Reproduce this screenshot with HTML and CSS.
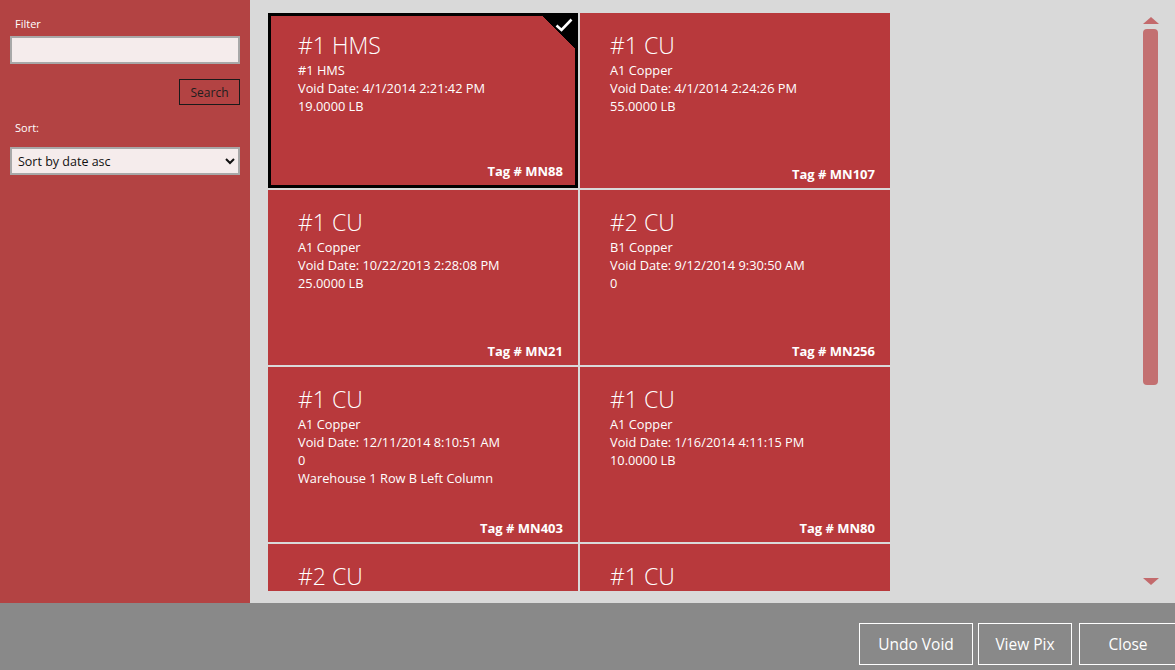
FILE: index.html
```html
<!DOCTYPE html>
<html lang="en">

<head>
    <meta charset="UTF-8">
    <meta name="viewport" content="width=device-width, initial-scale=1.0">
    <title>Void Tags</title>
    <link rel="stylesheet" href="styles.css">
</head>

<body>
    <div id="main">
        <div id="sidebar">
            <label class="field-label">Filter</label>
            <input type="text" class="filter-input">
            <div class="search-row">
                <button class="search-btn">Search</button>
            </div>
            <label class="field-label sort-label">Sort:</label>
            <select class="sort-select">
                <option>Sort by date asc</option>
                <option>Sort by date desc</option>
            </select>
        </div>

        <div id="content">
            <div id="tiles">
                <div class="tile selected">
                    <span class="check">
                        <svg width="18" height="14" viewBox="0 0 18 14">
                            <path d="M1.5 7.5 L6.5 12 L16.5 1.5" fill="none" stroke="#fff" stroke-width="2.6"/>
                        </svg>
                    </span>
                    <div class="title">#1 HMS</div>
                    <div class="line">#1 HMS</div>
                    <div class="line">Void Date: 4/1/2014 2:21:42 PM</div>
                    <div class="line">19.0000 LB</div>
                    <div class="tag">Tag # MN88</div>
                </div>
                <div class="tile">
                    <div class="title">#1 CU</div>
                    <div class="line">A1 Copper</div>
                    <div class="line">Void Date: 4/1/2014 2:24:26 PM</div>
                    <div class="line">55.0000 LB</div>
                    <div class="tag">Tag # MN107</div>
                </div>
                <div class="tile">
                    <div class="title">#1 CU</div>
                    <div class="line">A1 Copper</div>
                    <div class="line">Void Date: 10/22/2013 2:28:08 PM</div>
                    <div class="line">25.0000 LB</div>
                    <div class="tag">Tag # MN21</div>
                </div>
                <div class="tile">
                    <div class="title">#2 CU</div>
                    <div class="line">B1 Copper</div>
                    <div class="line">Void Date: 9/12/2014 9:30:50 AM</div>
                    <div class="line">0</div>
                    <div class="tag">Tag # MN256</div>
                </div>
                <div class="tile">
                    <div class="title">#1 CU</div>
                    <div class="line">A1 Copper</div>
                    <div class="line">Void Date: 12/11/2014 8:10:51 AM</div>
                    <div class="line">0</div>
                    <div class="line">Warehouse 1 Row B Left Column</div>
                    <div class="tag">Tag # MN403</div>
                </div>
                <div class="tile">
                    <div class="title">#1 CU</div>
                    <div class="line">A1 Copper</div>
                    <div class="line">Void Date: 1/16/2014 4:11:15 PM</div>
                    <div class="line">10.0000 LB</div>
                    <div class="tag">Tag # MN80</div>
                </div>
                <div class="tile">
                    <div class="title">#2 CU</div>
                </div>
                <div class="tile">
                    <div class="title">#1 CU</div>
                </div>
            </div>

            <div id="scrollbar">
                <span class="arrow-up"></span>
                <span class="thumb"></span>
                <span class="track"></span>
                <span class="arrow-down"></span>
            </div>
        </div>
    </div>

    <div id="footer">
        <button class="foot-btn undo-btn">Undo Void</button>
        <button class="foot-btn pix-btn">View Pix</button>
        <button class="foot-btn close-btn">Close</button>
    </div>
</body>

</html>
```

FILE: styles.css
```css
* {
    margin: 0;
    padding: 0;
    box-sizing: border-box;
}

body {
    width: 1175px;
    height: 670px;
    overflow: hidden;
    font-family: "Open Sans", "Noto Sans", sans-serif;
    background: #d9d9d9;
}

#main {
    display: flex;
    height: 603px;
}

/* left filter panel */
#sidebar {
    width: 250px;
    background: #b34343;
    padding: 16px 10px 0 10px;
    display: flex;
    flex-direction: column;
}

.field-label {
    color: #fff;
    font-size: 11px;
    padding-left: 5px;
    height: 17px;
}

.filter-input {
    margin-top: 3px;
    width: 230px;
    height: 28px;
    background: #f5ecec;
    border: 2px solid #a8a8a8;
    outline: none;
}

.search-row {
    display: flex;
    justify-content: flex-end;
    margin-top: 15px;
}

.search-btn {
    width: 61px;
    height: 26px;
    background: transparent;
    border: 1px solid #1a1a1a;
    color: #1e1e1e;
    font-family: inherit;
    font-size: 12px;
}

.sort-label {
    margin-top: 15px;
}

.sort-select {
    margin-top: 10px;
    width: 230px;
    height: 28px;
    background: #f5ecec;
    border: 2px solid #a8a8a8;
    font-family: inherit;
    font-size: 12.5px;
    padding-left: 2px;
    color: #111;
}

/* tile area */
#content {
    flex: 1;
    display: flex;
    padding: 13px 17px 0 18px;
}

#tiles {
    width: 622px;
    height: 578px;
    overflow: hidden;
    display: grid;
    grid-template-columns: 310px 310px;
    grid-auto-rows: 175px;
    gap: 2px;
    align-content: start;
}

.tile {
    position: relative;
    background: #b8393c;
    color: #fff;
    padding: 17px 15px 0 30px;
    display: flex;
    flex-direction: column;
}

.tile.selected {
    border: 3px solid #000;
    padding: 14px 12px 0 27px;
}

.title {
    font-size: 23px;
    font-weight: 300;
    line-height: 30px;
    margin-bottom: 1px;
}

.line {
    font-size: 12.8px;
    line-height: 18px;
}

.tag {
    margin-top: auto;
    margin-bottom: 5px;
    text-align: right;
    font-weight: bold;
    font-size: 13px;
    line-height: 18px;
}

.check {
    position: absolute;
    top: 0;
    right: 0;
    width: 33px;
    height: 33px;
    background: linear-gradient(to bottom left, #000 50%, transparent 50%);
}

.check svg {
    position: absolute;
    top: 2px;
    right: 2px;
}

/* scrollbar */
#scrollbar {
    margin-left: auto;
    width: 15px;
    display: flex;
    flex-direction: column;
    align-items: center;
    padding-top: 4px;
}

.arrow-up {
    width: 0;
    height: 0;
    border-left: 8px solid transparent;
    border-right: 8px solid transparent;
    border-bottom: 7px solid #c36a6c;
}

.thumb {
    margin-top: 5px;
    width: 15px;
    height: 356px;
    border-radius: 4px;
    background: #c37071;
}

.track {
    flex: 1;
}

.arrow-down {
    width: 0;
    height: 0;
    margin-bottom: 18px;
    border-left: 8px solid transparent;
    border-right: 8px solid transparent;
    border-top: 7px solid #c36a6c;
}

/* bottom command bar */
#footer {
    height: 67px;
    background: #898989;
    display: flex;
    justify-content: flex-end;
    align-items: flex-start;
    padding-top: 20px;
    gap: 5px;
}

.foot-btn {
    height: 42px;
    background: transparent;
    border: 1px solid #fff;
    color: #fff;
    font-family: inherit;
    font-size: 15.5px;
    white-space: nowrap;
}

.undo-btn {
    width: 114px;
}

.pix-btn {
    width: 94px;
    margin-right: 2px;
}

.close-btn {
    width: 98px;
    margin-right: -2px;
}
```
